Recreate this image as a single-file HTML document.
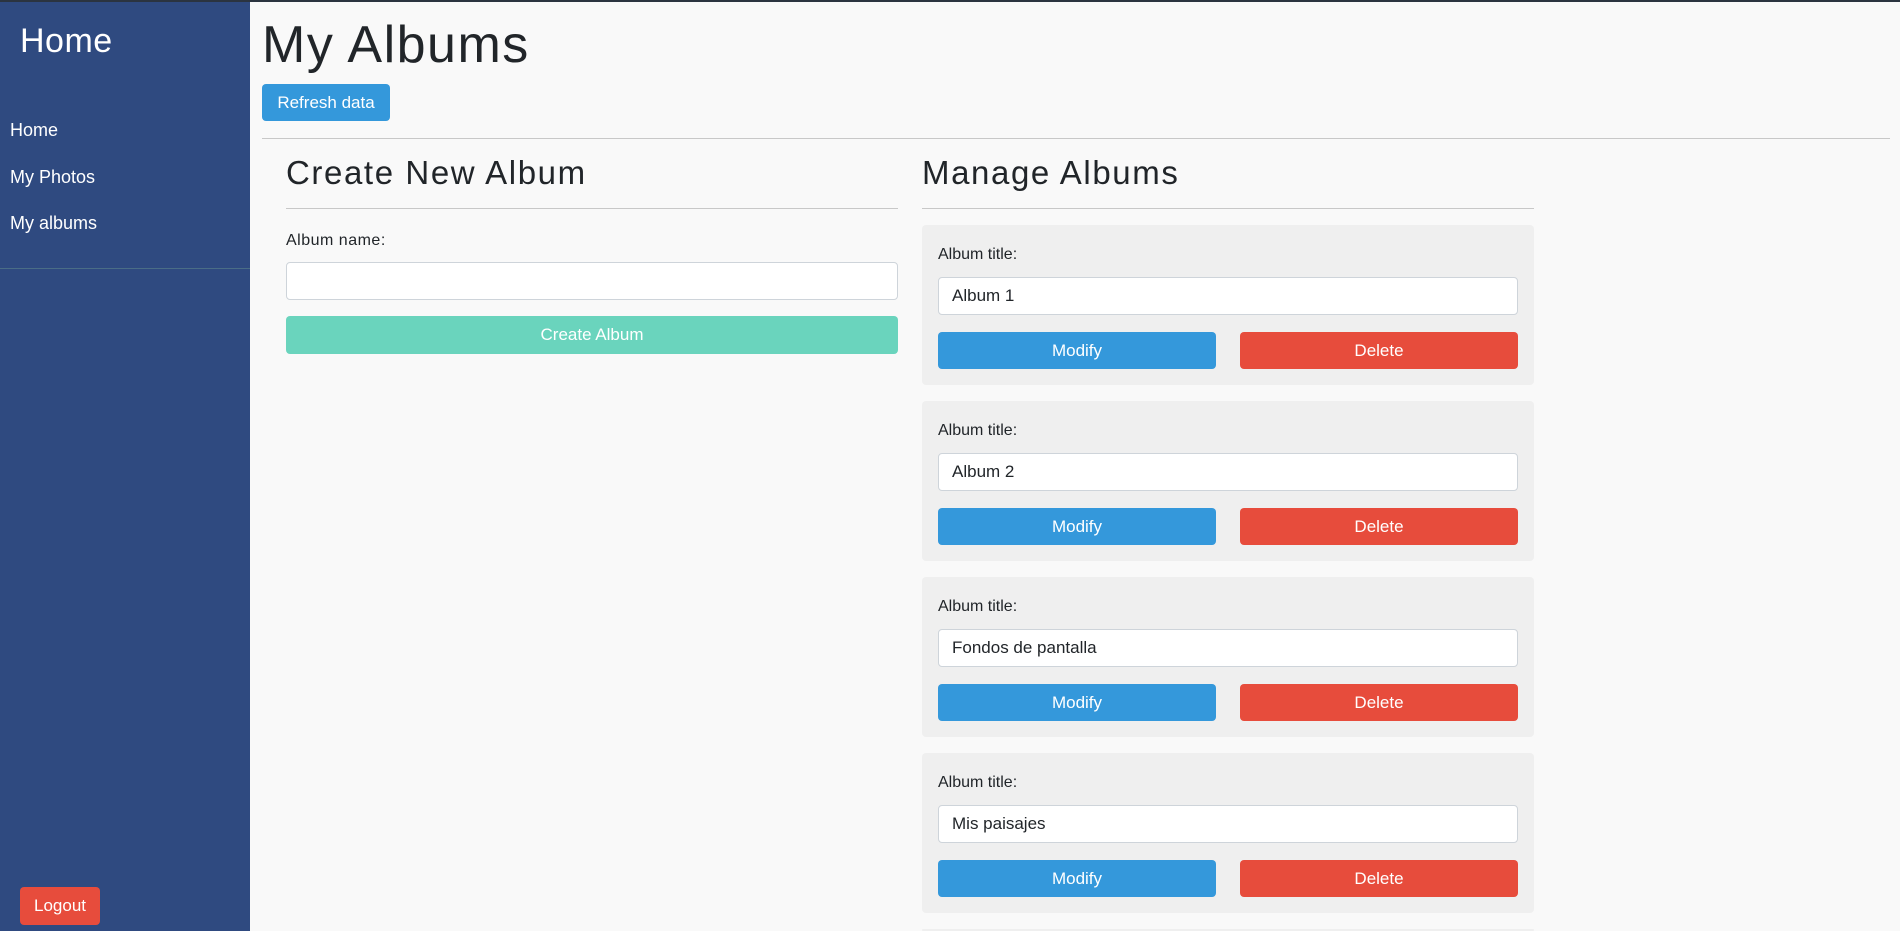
<!DOCTYPE html>
<html><head><meta charset="utf-8"><style>
*{box-sizing:border-box;margin:0;padding:0}
html,body{width:1900px;height:931px;overflow:hidden}
body{background:#f9f9f9;font-family:"Liberation Sans",sans-serif;color:#212529}
#wrap{position:relative;width:1900px;height:931px;overflow:hidden}
.top{position:absolute;left:0;top:0;width:1900px;height:2px;background:#2b3440}
.side{position:absolute;left:0;top:2px;width:250px;height:929px;background:#2f4a80;color:#fff}
.side h1{position:absolute;left:20px;top:20px;font-size:34px;font-weight:normal;letter-spacing:0.5px}
.side .nav{position:absolute;left:10px;font-size:18px}
.side .div{position:absolute;left:0;top:266px;width:250px;height:1px;background:#4a6d86}
.btn{position:absolute;color:#fff;border-radius:4px;display:flex;align-items:center;justify-content:center;font-size:17px}
.blue{background:#3498db}.red{background:#e74c3c}
.abs{position:absolute}
.hr{position:absolute;height:1px;background:#c8c8c8}
.inp{position:absolute;background:#fff;border:1px solid #ced4da;border-radius:4px;font-size:17px;padding-left:13px;display:flex;align-items:center}
.card{position:absolute;left:922px;width:612px;height:160px;background:#efefef;border-radius:4px}
.card .lab{position:absolute;left:16px;top:21px;font-size:16px}
.card .inp{left:16px;top:52px;width:580px;height:38px}
.card .btn{top:107px;height:37px;width:278px}
</style></head><body><div id="wrap">
<div class="top"></div>
<div class="side">
<h1>Home</h1>
<div class="nav" style="top:118px">Home</div>
<div class="nav" style="top:165px">My Photos</div>
<div class="nav" style="top:211px">My albums</div>
<div class="div"></div>
<div class="btn red" style="left:20px;top:885px;width:80px;height:38px">Logout</div>
</div>
<div class="abs" style="left:262px;top:15px;font-size:52px;letter-spacing:1.5px">My Albums</div>
<div class="btn blue" style="left:262px;top:84px;width:128px;height:37px">Refresh data</div>
<div class="hr" style="left:262px;top:138px;width:1628px"></div>
<div class="abs" style="left:286px;top:154px;font-size:33px;letter-spacing:1.6px">Create New Album</div>
<div class="hr" style="left:286px;top:208px;width:612px"></div>
<div class="abs" style="left:286px;top:232px;font-size:16px;letter-spacing:0.5px">Album name:</div>
<div class="inp" style="left:286px;top:262px;width:612px;height:38px"></div>
<div class="btn" style="left:286px;top:316px;width:612px;height:38px;background:#6ad4bd">Create Album</div>
<div class="abs" style="left:922px;top:154px;font-size:33px;letter-spacing:1.6px">Manage Albums</div>
<div class="hr" style="left:922px;top:208px;width:612px"></div>
<div class="card" style="top:225px"><div class="lab">Album title:</div><div class="inp">Album 1</div><div class="btn blue" style="left:16px">Modify</div><div class="btn red" style="left:318px">Delete</div></div>
<div class="card" style="top:401px"><div class="lab">Album title:</div><div class="inp">Album 2</div><div class="btn blue" style="left:16px">Modify</div><div class="btn red" style="left:318px">Delete</div></div>
<div class="card" style="top:577px"><div class="lab">Album title:</div><div class="inp">Fondos de pantalla</div><div class="btn blue" style="left:16px">Modify</div><div class="btn red" style="left:318px">Delete</div></div>
<div class="card" style="top:753px"><div class="lab">Album title:</div><div class="inp">Mis paisajes</div><div class="btn blue" style="left:16px">Modify</div><div class="btn red" style="left:318px">Delete</div></div>
<div class="card" style="top:929px;height:2px"></div>
</div></body></html>
